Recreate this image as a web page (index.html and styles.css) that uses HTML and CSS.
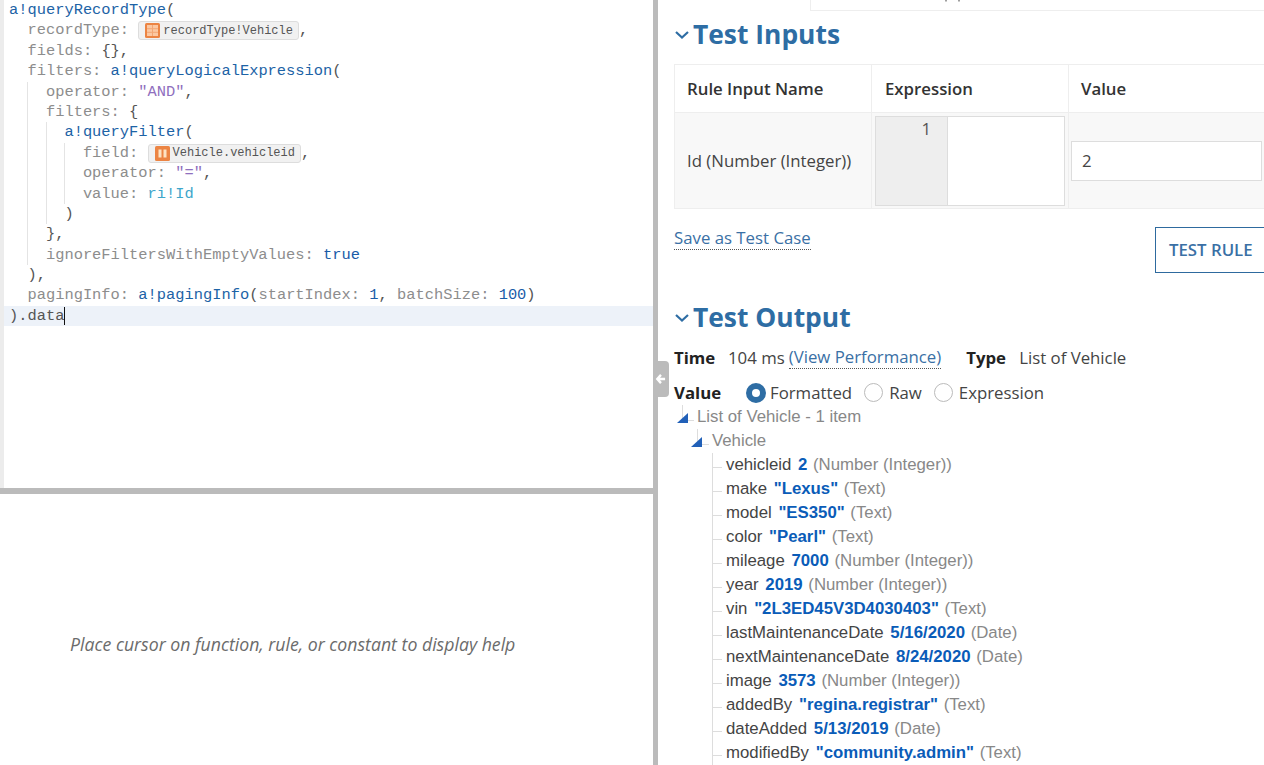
FILE: index.html
```html
<!DOCTYPE html>
<html lang="en">
<head>
    <meta charset="utf-8">
    <title>Expression Rule</title>
    <link rel="stylesheet" href="styles.css">
</head>
<body>
<div class="main">
    <div class="left">
        <div class="editor">
            <div class="code">
                <div class="line"><span class="fn">a!queryRecordType</span><span class="pn">(</span></div>
                <div class="line"><span class="ind"></span><span class="key">recordType:</span> <span class="token"><svg class="token-icon" viewBox="0 0 15 15"><rect width="15" height="15" rx="1.5" fill="#ec8443"/><rect x="2" y="2" width="11" height="11" fill="#fbc8a2"/><path d="M2 5.7h11M2 9.3h11M7.5 2v11" stroke="#f3a775" stroke-width="1" fill="none"/></svg>recordType!Vehicle</span><span class="pn">,</span></div>
                <div class="line"><span class="ind"></span><span class="key">fields:</span> <span class="pn">{},</span></div>
                <div class="line"><span class="ind"></span><span class="key">filters:</span> <span class="fn">a!queryLogicalExpression</span><span class="pn">(</span></div>
                <div class="line"><span class="ind"></span><span class="ind guide"></span><span class="key">operator:</span> <span class="str">"AND"</span><span class="pn">,</span></div>
                <div class="line"><span class="ind"></span><span class="ind guide"></span><span class="key">filters:</span> <span class="pn">{</span></div>
                <div class="line"><span class="ind"></span><span class="ind guide"></span><span class="ind guide"></span><span class="fn">a!queryFilter</span><span class="pn">(</span></div>
                <div class="line"><span class="ind"></span><span class="ind guide"></span><span class="ind guide"></span><span class="ind guide"></span><span class="key">field:</span> <span class="token"><svg class="token-icon" viewBox="0 0 15 15"><rect width="15" height="15" rx="1.5" fill="#ec8443"/><path d="M5 3.5v8M10 3.5v8" stroke="#fde3c4" stroke-width="3" fill="none"/></svg>Vehicle.vehicleid</span><span class="pn">,</span></div>
                <div class="line"><span class="ind"></span><span class="ind guide"></span><span class="ind guide"></span><span class="ind guide"></span><span class="key">operator:</span> <span class="str">"="</span><span class="pn">,</span></div>
                <div class="line"><span class="ind"></span><span class="ind guide"></span><span class="ind guide"></span><span class="ind guide"></span><span class="key">value:</span> <span class="var">ri!Id</span></div>
                <div class="line"><span class="ind"></span><span class="ind guide"></span><span class="ind guide"></span><span class="pn">)</span></div>
                <div class="line"><span class="ind"></span><span class="ind guide"></span><span class="pn">},</span></div>
                <div class="line"><span class="ind"></span><span class="ind guide"></span><span class="key">ignoreFiltersWithEmptyValues:</span> <span class="lit">true</span></div>
                <div class="line"><span class="ind"></span><span class="pn">),</span></div>
                <div class="line"><span class="ind"></span><span class="key">pagingInfo:</span> <span class="fn">a!pagingInfo</span><span class="pn">(</span><span class="key">startIndex:</span> <span class="lit">1</span><span class="pn">,</span> <span class="key">batchSize:</span> <span class="lit">100</span><span class="pn">)</span></div>
                <div class="line active"><span class="pn">).</span><span class="plain">data</span><span class="cursor"></span></div>
            </div>
        </div>
        <div class="hsplit"></div>
        <div class="help">Place cursor on function, rule, or constant to display help</div>
    </div>

    <div class="vsplit">
        <div class="collapse">
            <svg viewBox="0 0 12 12" width="12" height="12"><path d="M6.5 1.5L2.5 6l4 4.5M3 6h8" stroke="#fff" stroke-width="2.6" fill="none"/></svg>
        </div>
    </div>

    <div class="right">
        <div class="content">
            <div class="tab-strip">
                <svg class="tab-marks" viewBox="0 0 15 2"><path d="M1 0v1.5M14 0v1.5" stroke="#777" stroke-width="1.4" fill="none"/></svg>
            </div>

            <h2 class="section-head inputs-head">
                <svg class="chevron" viewBox="0 0 14 8"><path d="M1 1l6 5.5L13 1" stroke="#2e6da4" stroke-width="2.2" fill="none"/></svg>
                Test Inputs
            </h2>

            <table class="inputs">
                <thead>
                    <tr><th>Rule Input Name</th><th>Expression</th><th>Value</th></tr>
                </thead>
                <tbody>
                    <tr>
                        <td>Id (Number (Integer))</td>
                        <td class="expr-cell">
                            <div class="expr"><div class="expr-gutter">1</div><div class="expr-body"></div></div>
                        </td>
                        <td class="value-cell"><div class="value-input">2</div></td>
                    </tr>
                </tbody>
            </table>

            <div class="actions">
                <a href="#" class="save-link">Save as Test Case</a>
                <a href="#" class="test-btn">TEST RULE</a>
            </div>

            <h2 class="section-head output-head">
                <svg class="chevron" viewBox="0 0 14 8"><path d="M1 1l6 5.5L13 1" stroke="#2e6da4" stroke-width="2.2" fill="none"/></svg>
                Test Output
            </h2>

            <div class="meta">
                <b class="meta-label">Time</b>
                <span class="meta-time">104 ms</span>
                <a href="#" class="perf-link">(View Performance)</a>
                <b class="meta-label type-label">Type</b>
                <span>List of Vehicle</span>
            </div>

            <div class="value-row">
                <b class="meta-label value-label">Value</b>
                <span class="radio checked"></span><span class="radio-text">Formatted</span>
                <span class="radio"></span><span class="radio-text">Raw</span>
                <span class="radio"></span><span class="radio-text">Expression</span>
            </div>

            <ul class="tree">
                <li class="node lvl-0">List of Vehicle - 1 item</li>
                <li class="node lvl-1">Vehicle</li>
                <li class="leaf">vehicleid <b>2</b> <i>(Number (Integer))</i></li>
                <li class="leaf">make <b>"Lexus"</b> <i>(Text)</i></li>
                <li class="leaf">model <b>"ES350"</b> <i>(Text)</i></li>
                <li class="leaf">color <b>"Pearl"</b> <i>(Text)</i></li>
                <li class="leaf">mileage <b>7000</b> <i>(Number (Integer))</i></li>
                <li class="leaf">year <b>2019</b> <i>(Number (Integer))</i></li>
                <li class="leaf">vin <b>"2L3ED45V3D4030403"</b> <i>(Text)</i></li>
                <li class="leaf">lastMaintenanceDate <b>5/16/2020</b> <i>(Date)</i></li>
                <li class="leaf">nextMaintenanceDate <b>8/24/2020</b> <i>(Date)</i></li>
                <li class="leaf">image <b>3573</b> <i>(Number (Integer))</i></li>
                <li class="leaf">addedBy <b>"regina.registrar"</b> <i>(Text)</i></li>
                <li class="leaf">dateAdded <b>5/13/2019</b> <i>(Date)</i></li>
                <li class="leaf">modifiedBy <b>"community.admin"</b> <i>(Text)</i></li>
            </ul>
        </div>
    </div>
</div>
</body>
</html>
```

FILE: styles.css
```css
* {
    box-sizing: border-box;
}
html, body {
    height: 100%;
    margin: 0;
    overflow: hidden;
}
body {
    background: #fff;
    color: #444;
    font: 16.8px "Open Sans", Arial, sans-serif;
}
a {
    text-decoration: none;
}
.main {
    display: flex;
    height: 765px;
}

/* left side */
.left {
    display: flex;
    flex-direction: column;
    flex: 0 0 653px;
}
.editor {
    flex: 0 0 488px;
    background: #fff;
    border-left: 4px solid #ececec;
    overflow: hidden;
}
.code {
    font: 15.4px/20.4px "Liberation Mono", monospace;
    padding-left: 5px;
}
.line {
    height: 20.4px;
    white-space: pre;
}
.line.active {
    background: #edf2f9;
    margin-left: -5px;
    padding-left: 5px;
}
.ind {
    display: inline-block;
    width: 2ch;
    height: 20.4px;
    vertical-align: top;
}
.guide {
    border-left: 1px solid #e4e4e4;
}
.fn { color: #1d63a6; }
.key { color: #8d8d8d; }
.pn { color: #555; }
.str { color: #8f6fbe; }
.var { color: #3ea6cb; }
.lit { color: #1a5ca8; }
.plain { color: #555; }
.cursor {
    display: inline-block;
    width: 1px;
    height: 18px;
    background: #111;
    vertical-align: top;
    margin-top: 1px;
}
.token {
    display: inline-flex;
    align-items: center;
    height: 19px;
    padding: 0 5px 0 6px;
    background: #f1f1f1;
    border: 1px solid #ddd;
    border-radius: 3px;
    font-size: 12px;
    color: #555;
    vertical-align: top;
    margin-top: 1px;
}
.token-icon {
    width: 15px;
    height: 15px;
    margin-right: 3px;
}
.hsplit {
    flex: 0 0 6px;
    background: #bbb;
}
.help {
    flex: 1;
    padding: 138px 0 0 70px;
    font-size: 17.7px;
    font-style: italic;
    color: #6b6b6b;
}

/* splitter */
.vsplit {
    position: relative;
    flex: 0 0 5px;
    background: #bbb;
}
.collapse {
    position: absolute;
    left: 2px;
    top: 361px;
    width: 14px;
    height: 36px;
    padding-right: 3px;
    background: #bbb;
    border-radius: 0 4px 4px 0;
    display: flex;
    align-items: center;
    justify-content: center;
}

/* right side */
.right {
    flex: 1;
    min-width: 0;
    overflow: hidden;
}
.content {
    width: 617px;
    padding-left: 16px;
}
.tab-strip {
    display: flex;
    align-items: flex-start;
    height: 11px;
    margin-left: 136px;
    padding-left: 134px;
    border-left: 1px solid #eee;
    border-bottom: 1px solid #eee;
}
.tab-marks {
    width: 15px;
    height: 2px;
}
.section-head {
    display: flex;
    align-items: center;
    height: 46px;
    margin: 0;
    color: #2e6da4;
    font-size: 26.4px;
    font-weight: 700;
}
.inputs-head {
    height: 45px;
}
.chevron {
    width: 14px;
    height: 8px;
    margin: 2px 4px 0 1px;
}
.inputs {
    width: 601px;
    margin-top: 8px;
    border-collapse: collapse;
    table-layout: fixed;
    font-size: 16.8px;
}
.inputs th, .inputs td {
    border: 1px solid #eee;
    padding: 0 12px;
    text-align: left;
    font-weight: 400;
}
.inputs th {
    height: 48px;
    font-weight: 600;
    color: #333;
}
.inputs th:nth-child(1), .inputs th:nth-child(2) {
    width: 197px;
}
.inputs th:nth-child(2) {
    padding-left: 13px;
}
.inputs td {
    height: 96px;
    background: #f8f8f8;
}
.inputs td.expr-cell {
    padding: 0 3px;
}
.inputs td.value-cell {
    padding: 0 2px;
}
.expr {
    display: flex;
    height: 90px;
    border: 1px solid #ddd;
    background: #fff;
}
.expr-gutter {
    flex: 0 0 72px;
    padding: 0 16px 0 0;
    background: #eee;
    border-right: 1px solid #ddd;
    text-align: right;
    color: #555;
}
.expr-body {
    flex: 1;
}
.value-input {
    width: 191px;
    height: 40px;
    padding-left: 10px;
    border: 1px solid #ddd;
    background: #fff;
    line-height: 38px;
}
.actions {
    display: flex;
    justify-content: space-between;
    width: 601px;
    height: 64px;
}
.save-link {
    align-self: flex-start;
    margin-top: 17px;
    color: #3a70a5;
    line-height: 23px;
    border-bottom: 1px dotted #555;
}
.test-btn {
    align-self: flex-end;
    width: 120px;
    height: 46px;
    padding-left: 13px;
    border: 1px solid #2e6a9e;
    color: #3a70a5;
    font-weight: 600;
    line-height: 44px;
}
.output-head {
    margin-top: 21px;
}
.meta, .value-row {
    display: flex;
    align-items: center;
    height: 24px;
    white-space: nowrap;
}
.meta {
    margin-top: 5px;
}
.meta-label {
    font-weight: 700;
    color: #222;
    width: 54px;
}
.meta-time {
    margin-right: 4px;
}
.perf-link {
    margin-top: 1px;
    color: #3a70a5;
    border-bottom: 1px dotted #555;
    line-height: 22px;
}
.type-label {
    width: 53px;
    margin-left: 25px;
}
.value-row {
    margin-top: 12px;
    height: 23px;
}
.value-label {
    width: 72px;
}
.radio {
    flex: none;
    width: 19px;
    height: 19px;
    margin-right: 6px;
    border: 1px solid #bbb;
    border-radius: 50%;
    background: #fff;
}
.radio.checked {
    width: 20px;
    height: 20px;
    margin-right: 4px;
    border: 6px solid #2e6da4;
}
.radio-text {
    margin-right: 12px;
}
.tree {
    list-style: none;
    margin: 1px 0 0;
    padding: 0;
    font: 16.8px/24px "Liberation Sans", Arial, sans-serif;
    color: #444;
    white-space: nowrap;
}
.tree b {
    color: #0a5cb8;
    margin-left: 2px;
}
.tree i {
    font-style: normal;
    color: #888;
    margin-left: 1px;
}
.node {
    position: relative;
    height: 24px;
    color: #888;
}
.node::before {
    content: "";
    position: absolute;
    z-index: 1;
    bottom: 6px;
    width: 11px;
    height: 10px;
    background: #2160b8;
    clip-path: polygon(100% 0, 100% 100%, 0 100%);
}
.node::after {
    content: "";
    position: absolute;
    top: 0;
    width: 11px;
    height: 15px;
    border-left: 1px solid #ddd;
    border-bottom: 1px solid #ddd;
}
.lvl-0 { padding-left: 23px; }
.lvl-0::before { left: 3px; }
.lvl-0::after { left: 8px; }
.lvl-1 { padding-left: 38px; }
.lvl-1::before { left: 17px; }
.lvl-1::after { left: 23px; }
.leaf {
    position: relative;
    height: 24px;
    padding-left: 52px;
}
.leaf::before {
    content: "";
    position: absolute;
    left: 38px;
    top: 0;
    width: 1px;
    height: 24px;
    background: #ddd;
}
.leaf::after {
    content: "";
    position: absolute;
    left: 38px;
    top: 14px;
    width: 10px;
    height: 1px;
    background: #ddd;
}
```
